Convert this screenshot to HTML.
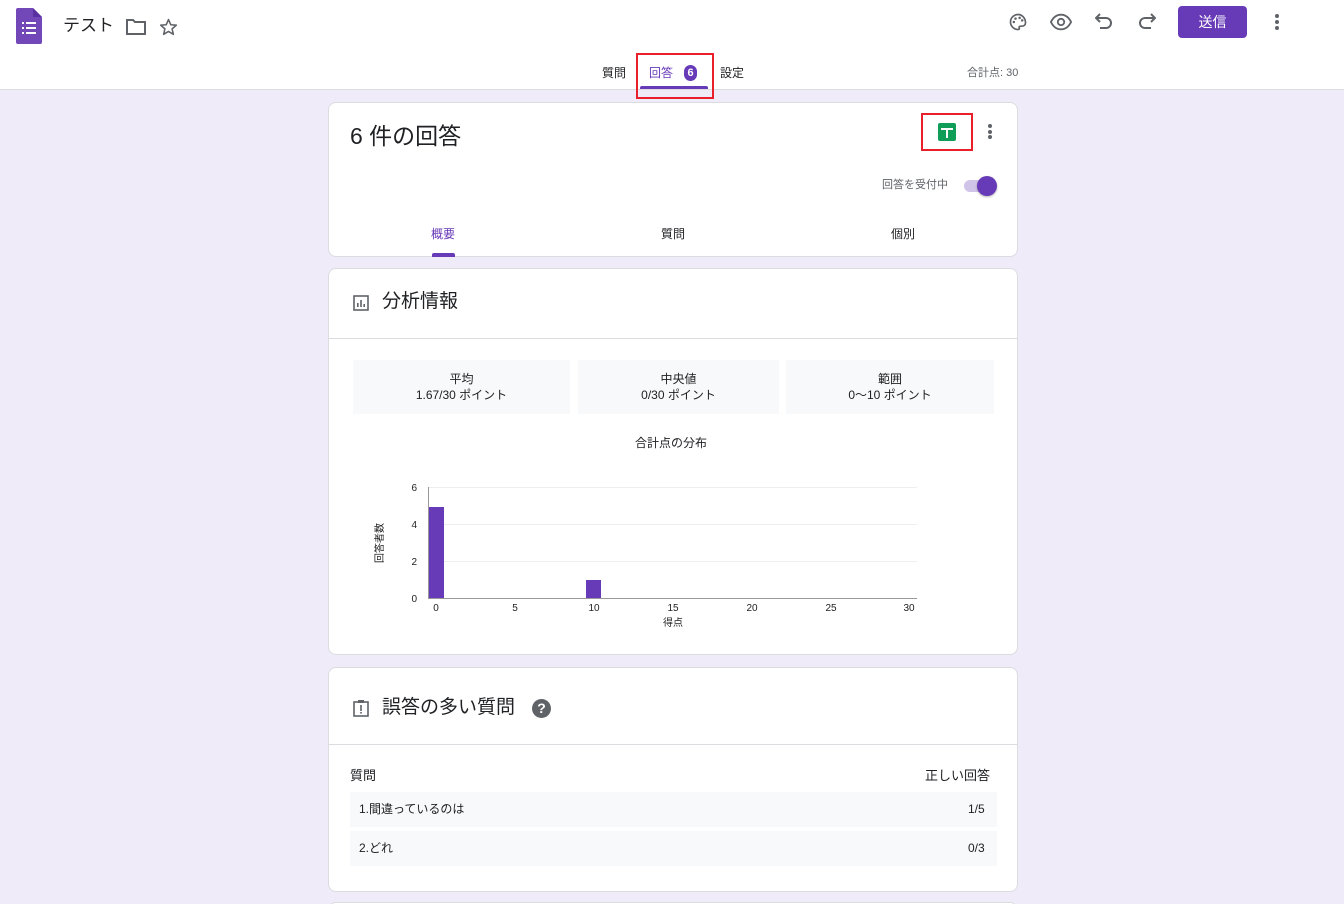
<!DOCTYPE html><html><head><meta charset="utf-8"><style>
*{box-sizing:border-box;margin:0;padding:0}
html,body{width:1344px;height:904px;overflow:hidden}
body{background:#f0ebf8;font-family:"Liberation Sans","Noto Sans CJK JP",sans-serif;color:#202124;position:relative;line-height:1.2}
.abs{position:absolute}
.card{position:absolute;left:328px;width:690px;background:#fff;border:1px solid #dadce0;border-radius:8px}
.sm{font-size:12px}
</style></head><body>
<div class="abs" style="left:0;top:0;width:1344px;height:90px;background:#fff;border-bottom:1px solid #dadce0"></div>
<svg class="abs" style="left:16px;top:8px" width="26" height="36" viewBox="0 0 26 36"><path d="M2 0h15l9 9v25a2 2 0 0 1-2 2H2a2 2 0 0 1-2-2V2a2 2 0 0 1 2-2z" fill="#7248b9"/><path d="M17 0l9 9h-9z" fill="#5a2fa0"/><g fill="#fff"><rect x="6" y="14" width="2" height="2"/><rect x="10" y="14" width="10" height="2"/><rect x="6" y="19" width="2" height="2"/><rect x="10" y="19" width="10" height="2"/><rect x="6" y="24" width="2" height="2"/><rect x="10" y="24" width="10" height="2"/></g></svg>
<div class="abs" style="left:63px;top:16px;font-size:17px">テスト</div>
<svg class="abs" style="left:126px;top:19px" width="20" height="16" viewBox="0 0 20 16"><path d="M1 1h6l2 2h10v12H1z" fill="none" stroke="#5f6368" stroke-width="2"/></svg>
<svg class="abs" style="left:159px;top:18px" width="19" height="18" viewBox="0 0 24 23"><path d="M12 2l2.9 6.6 7.1.6-5.4 4.7 1.6 7L12 17.2 5.8 20.9l1.6-7L2 9.2l7.1-.6z" fill="none" stroke="#5f6368" stroke-width="2" stroke-linejoin="round"/></svg>
<svg class="abs" style="left:1008px;top:12px" width="20" height="20" viewBox="0 0 24 24"><path d="M12 3a9 9 0 0 0 0 18c1.5 0 2-1 1.5-2s0-2 1.5-2h2a4 4 0 0 0 4-4c0-5.5-4-10-9-10z" fill="none" stroke="#5f6368" stroke-width="2"/><circle cx="7" cy="12" r="1.5" fill="#5f6368"/><circle cx="9" cy="8" r="1.5" fill="#5f6368"/><circle cx="14" cy="7" r="1.5" fill="#5f6368"/><circle cx="17" cy="10" r="1.5" fill="#5f6368"/></svg>
<svg class="abs" style="left:1050px;top:12px" width="22" height="20" viewBox="0 0 24 20"><path d="M1 10C4 4 8 2 12 2s8 2 11 8c-3 6-7 8-11 8S4 16 1 10z" fill="none" stroke="#5f6368" stroke-width="2"/><circle cx="12" cy="10" r="3.5" fill="none" stroke="#5f6368" stroke-width="2"/></svg>
<svg class="abs" style="left:1095px;top:12px" width="18" height="18" viewBox="0 0 18 18"><path d="M5 2L1 6l4 4M1 6h10a5 5 0 0 1 0 10H5" fill="none" stroke="#5f6368" stroke-width="2"/></svg>
<svg class="abs" style="left:1138px;top:12px" width="18" height="18" viewBox="0 0 18 18"><path d="M13 2l4 4-4 4M17 6H7a5 5 0 0 0 0 10h6" fill="none" stroke="#5f6368" stroke-width="2"/></svg>
<div class="abs" style="left:1178px;top:6px;width:69px;height:32px;background:#673ab7;border-radius:4px;color:#fff;font-size:14px;text-align:center;line-height:32px">送信</div>
<div class="abs" style="left:1275px;top:14px;width:4px">
<div style="width:4px;height:4px;border-radius:2px;background:#5f6368;margin-bottom:2px"></div><div style="width:4px;height:4px;border-radius:2px;background:#5f6368;margin-bottom:2px"></div><div style="width:4px;height:4px;border-radius:2px;background:#5f6368"></div></div>
<div class="abs sm" style="left:602px;top:66px">質問</div>
<div class="abs sm" style="left:649px;top:66px;color:#673ab7">回答</div>
<div class="abs" style="left:684px;top:65px;width:13px;height:16px;border-radius:7px;background:#673ab7;color:#fff;font-size:11px;text-align:center;line-height:16px;font-weight:bold">6</div>
<div class="abs" style="left:640px;top:86px;width:68px;height:3px;background:#673ab7;border-radius:2px 2px 0 0"></div>
<div class="abs sm" style="left:720px;top:66px">設定</div>
<div class="abs" style="left:636px;top:53px;width:78px;height:46px;border:2px solid #e8202a"></div>
<div class="abs" style="left:967px;top:67px;font-size:11px;color:#5f6368">合計点: 30</div>

<div class="card" style="top:102px;height:155px">
<div class="abs" style="left:21px;top:20px;font-size:23px">6 件の回答</div>
<div class="abs" style="left:592px;top:10px;width:52px;height:38px;border:2px solid #e8202a"></div>
<div class="abs" style="left:609px;top:20px;width:18px;height:18px;background:#0f9d58;border-radius:2px"><div class="abs" style="left:3px;top:5px;width:12px;height:2px;background:#fff"></div><div class="abs" style="left:8px;top:5px;width:2px;height:10px;background:#fff"></div></div>
<div class="abs" style="left:659px;top:21px;width:4px"><div style="width:4px;height:4px;border-radius:2px;background:#5f6368;margin-bottom:1.5px"></div><div style="width:4px;height:4px;border-radius:2px;background:#5f6368;margin-bottom:1.5px"></div><div style="width:4px;height:4px;border-radius:2px;background:#5f6368"></div></div>
<div class="abs" style="left:553px;top:76px;font-size:11px;color:#5f6368">回答を受付中</div>
<div class="abs" style="left:635px;top:77px;width:32px;height:12px;border-radius:6px;background:#d1c4e9"></div>
<div class="abs" style="left:648px;top:73px;width:20px;height:20px;border-radius:10px;background:#673ab7;box-shadow:0 1px 2px rgba(0,0,0,.3)"></div>
<div class="abs sm" style="left:102px;top:124px;color:#673ab7">概要</div>
<div class="abs" style="left:103px;top:150px;width:23px;height:4px;background:#673ab7;border-radius:2px 2px 0 0"></div>
<div class="abs sm" style="left:332px;top:124px">質問</div>
<div class="abs sm" style="left:562px;top:124px">個別</div>
</div>

<div class="card" style="top:268px;height:387px">
<svg class="abs" style="left:24px;top:26px" width="16" height="16" viewBox="0 0 16 16"><rect x="1" y="1" width="14" height="14" fill="none" stroke="#5f6368" stroke-width="1.6"/><rect x="4" y="8" width="1.6" height="4" fill="#5f6368"/><rect x="7.2" y="5" width="1.6" height="7" fill="#5f6368"/><rect x="10.4" y="9" width="1.6" height="3" fill="#5f6368"/></svg>
<div class="abs" style="left:53px;top:22px;font-size:19px">分析情報</div>
<div class="abs" style="left:0;top:69px;width:688px;height:1px;background:#dadce0"></div>
<div class="abs" style="left:24px;top:91px;width:217px;height:54px;background:#f8f9fa;text-align:center;font-size:12px;padding-top:11px;line-height:16px">平均<br>1.67/30 ポイント</div>
<div class="abs" style="left:249px;top:91px;width:201px;height:54px;background:#f8f9fa;text-align:center;font-size:12px;padding-top:11px;line-height:16px">中央値<br>0/30 ポイント</div>
<div class="abs" style="left:457px;top:91px;width:208px;height:54px;background:#f8f9fa;text-align:center;font-size:12px;padding-top:11px;line-height:16px">範囲<br>0〜10 ポイント</div>
<div class="abs sm" style="left:306px;top:167px">合計点の分布</div>
</div>
<svg class="abs" style="left:340px;top:470px" width="600" height="170" viewBox="340 470 600 170" font-family="Liberation Sans,Noto Sans CJK JP,sans-serif" font-size="10" fill="#222">
<g stroke="#eee"><line x1="428" y1="487.5" x2="917" y2="487.5"/><line x1="428" y1="524.5" x2="917" y2="524.5"/><line x1="428" y1="561.5" x2="917" y2="561.5"/></g>
<line x1="428.5" y1="487" x2="428.5" y2="598" stroke="#999"/>
<rect x="429" y="507" width="15" height="91" fill="#673ab7"/>
<rect x="586" y="580" width="15" height="18" fill="#673ab7"/>
<line x1="428" y1="598.5" x2="917" y2="598.5" stroke="#999"/>
<g text-anchor="end"><text x="417" y="491">6</text><text x="417" y="528">4</text><text x="417" y="565">2</text><text x="417" y="602">0</text></g>
<g text-anchor="middle"><text x="436" y="611">0</text><text x="515" y="611">5</text><text x="594" y="611">10</text><text x="673" y="611">15</text><text x="752" y="611">20</text><text x="831" y="611">25</text><text x="909" y="611">30</text><text x="673" y="626">得点</text></g>
<text transform="translate(383,543) rotate(-90)" text-anchor="middle">回答者数</text>
</svg>

<div class="card" style="top:667px;height:225px">
<svg class="abs" style="left:24px;top:31px" width="16" height="18" viewBox="0 0 16 18"><rect x="1" y="3" width="14" height="14" fill="none" stroke="#5f6368" stroke-width="1.6"/><rect x="5" y="1" width="6" height="3" fill="#5f6368"/><rect x="7.2" y="6" width="1.6" height="6" fill="#5f6368"/><rect x="7.2" y="13" width="1.6" height="1.6" fill="#5f6368"/></svg>
<div class="abs" style="left:53px;top:29px;font-size:19px">誤答の多い質問</div>
<div class="abs" style="left:203px;top:31px;width:19px;height:19px;border-radius:10px;background:#5f6368;color:#fff;font-size:14px;font-weight:bold;text-align:center;line-height:19px">?</div>
<div class="abs" style="left:0;top:76px;width:688px;height:1px;background:#dadce0"></div>
<div class="abs" style="left:21px;top:100px;font-size:13px">質問</div>
<div class="abs" style="left:596px;top:100px;font-size:13px">正しい回答</div>
<div class="abs" style="left:21px;top:124px;width:647px;height:35px;background:#f8f9fa"></div>
<div class="abs" style="left:30px;top:133px;font-size:12px;line-height:16px">1.間違っているのは</div>
<div class="abs" style="left:639px;top:133px;font-size:12px;line-height:16px">1/5</div>
<div class="abs" style="left:21px;top:163px;width:647px;height:35px;background:#f8f9fa"></div>
<div class="abs" style="left:30px;top:172px;font-size:12px;line-height:16px">2.どれ</div>
<div class="abs" style="left:639px;top:172px;font-size:12px;line-height:16px">0/3</div>
</div>
<div class="card" style="top:902px;height:20px"></div>
</body></html>
